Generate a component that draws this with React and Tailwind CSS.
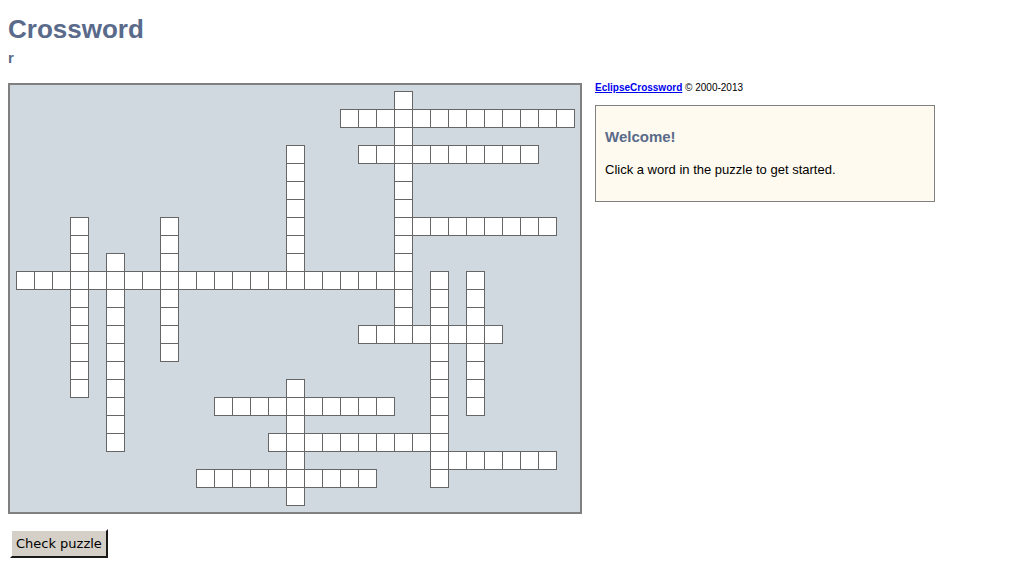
import React from 'react';

// word layout: [row, col, length]
const across = [
  [1, 18, 13],
  [3, 19, 10],
  [7, 21, 9],
  [10, 0, 22],
  [13, 19, 8],
  [17, 11, 10],
  [19, 14, 10],
  [20, 23, 7],
  [21, 10, 10],
];

// [col, row, length]
const down = [
  [21, 0, 14],
  [15, 3, 8],
  [3, 7, 10],
  [5, 9, 11],
  [8, 7, 8],
  [23, 10, 12],
  [25, 10, 8],
  [15, 16, 7],
];

function buildCells() {
  const seen = new Map();
  across.forEach(([r, c, n]) => {
    for (let i = 0; i < n; i++) seen.set(`${r}-${c + i}`, [r, c + i]);
  });
  down.forEach(([c, r, n]) => {
    for (let i = 0; i < n; i++) seen.set(`${r + i}-${c}`, [r + i, c]);
  });
  return Array.from(seen.entries());
}

const cells = buildCells();

function Puzzle() {
  return (
    <div className="w-[574px] h-[431px] shrink-0 border-2 border-[#808080] bg-[#d0d9e0] pt-[6px] pl-[6px]">
      <div className="grid grid-cols-[repeat(31,18px)] grid-rows-[repeat(23,18px)]">
        {cells.map(([key, [r, c]]) => (
          <div
            key={key}
            className="w-[19px] h-[19px] bg-white border border-[#666666]"
            style={{ gridRow: r + 1, gridColumn: c + 1 }}
          />
        ))}
      </div>
    </div>
  );
}

export default function App() {
  return (
    <div className="min-h-[568px] bg-white pl-[8px] font-['Liberation_Sans',Arial,sans-serif]">
      <h1 className="mt-[14px] text-[26px] leading-[30px] font-bold text-[#596a8a]">Crossword</h1>
      <h2 className="mt-[4px] text-[15px] leading-[19px] font-bold text-[#596a8a]">r</h2>

      <div className="mt-[16px] flex items-start">
        <Puzzle />

        <div className="ml-[13px] w-[340px]">
          <div className="text-[10px] leading-[10px] text-black">
            <a href="#" className="font-bold text-[#0000ee] underline">EclipseCrossword</a> &copy; 2000-2013
          </div>
          <div className="mt-[12px] h-[97px] border border-[#808080] bg-[#fffaef] px-[9px] pt-[22px]">
            <h3 className="text-[15px] leading-[18px] font-bold text-[#596a8a]">Welcome!</h3>
            <p className="mt-[16px] text-[13px] leading-[16px] text-black">Click a word in the puzzle to get started.</p>
          </div>
        </div>
      </div>

      <button className="mt-[15px] ml-[2px] h-[29px] px-[4px] bg-[#d4d0c8] text-[13px] text-black font-['DejaVu_Sans',sans-serif] border-t-2 border-l-2 border-t-[#ffffff] border-l-[#ffffff] border-r-2 border-b-2 border-r-[#1a1a1a] border-b-[#1a1a1a]">
        Check puzzle
      </button>
    </div>
  );
}
